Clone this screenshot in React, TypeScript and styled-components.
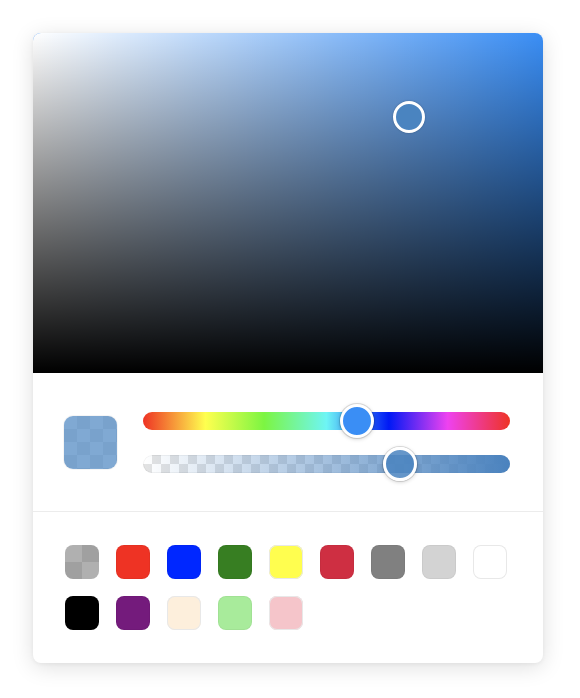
import React from "react";
import styled, { createGlobalStyle } from "styled-components";

const Global = createGlobalStyle`
  html, body { margin: 0; padding: 0; background: #ffffff; }
  body { font-family: "Liberation Sans", Arial, sans-serif; }
`;

const Page = styled.div`
  padding: 33px 37px 36px 33px;
`;

const Card = styled.div`
  width: 510px;
  background: #ffffff;
  border-radius: 8px;
  overflow: hidden;
  box-shadow: 0 4px 22px rgba(0, 0, 0, 0.13), 0 1px 4px rgba(0, 0, 0, 0.05);
`;

const Saturation = styled.div<{ $hue: string }>`
  position: relative;
  height: 340px;
  background: ${(p) => p.$hue};
`;

const WhiteLayer = styled.div`
  position: absolute;
  inset: 0;
  background: linear-gradient(to right, #ffffff, rgba(255, 255, 255, 0));
`;

const BlackLayer = styled.div`
  position: absolute;
  inset: 0;
  background: linear-gradient(to top, #000000, rgba(0, 0, 0, 0));
`;

const SatPointer = styled.div<{ $color: string }>`
  position: absolute;
  width: 26px;
  height: 26px;
  border-radius: 50%;
  border: 3px solid #ffffff;
  background: ${(p) => p.$color};
  transform: translate(-50%, -50%);
  box-shadow: 0 0 2px rgba(0, 0, 0, 0.25);
`;

const Controls = styled.div`
  display: flex;
  align-items: center;
  gap: 26px;
  padding: 39px 33px 38px 31px;
  border-bottom: 1px solid #ececec;
`;

const checker = (size: number, a: string, b: string) => `
  background-color: ${a};
  background-image:
    linear-gradient(45deg, ${b} 25%, transparent 25%, transparent 75%, ${b} 75%),
    linear-gradient(45deg, ${b} 25%, transparent 25%, transparent 75%, ${b} 75%);
  background-size: ${size * 2}px ${size * 2}px;
  background-position: 0 0, ${size}px ${size}px;
`;

const Preview = styled.div`
  position: relative;
  width: 53px;
  height: 53px;
  border-radius: 9px;
  overflow: hidden;
  flex: none;
  ${checker(13, "#ffffff", "#e6e6e6")}
  box-shadow: 0 0 0 1px rgba(0, 0, 0, 0.04);
`;

const Fill = styled.div<{ $color: string }>`
  position: absolute;
  inset: 0;
  background: ${(p) => p.$color};
`;

const Sliders = styled.div`
  flex: 1;
  display: flex;
  flex-direction: column;
  gap: 25px;
`;

const Track = styled.div`
  position: relative;
  height: 18px;
  border-radius: 9px;
`;

const HueTrack = styled(Track)`
  background: linear-gradient(
    to right,
    #ee3324 0%,
    #ffff4f 17%,
    #7cf542 33%,
    #6ef5f5 50%,
    #0019f5 67%,
    #ee42f0 83%,
    #ee3324 100%
  );
`;

const AlphaTrack = styled(Track)`
  overflow: visible;
`;

const AlphaBg = styled.div`
  position: absolute;
  inset: 0;
  border-radius: 9px;
  ${checker(9, "#ffffff", "#e3e3e3")}
  box-shadow: inset 0 0 0 1px rgba(0, 0, 0, 0.05);
`;

const AlphaGrad = styled.div<{ $color: string }>`
  position: absolute;
  inset: 0;
  border-radius: 9px;
  background: linear-gradient(to right, rgba(74, 130, 190, 0), ${(p) => p.$color});
`;

const Thumb = styled.div<{ $color: string }>`
  position: absolute;
  top: 50%;
  width: 28px;
  height: 28px;
  border-radius: 50%;
  border: 3px solid #ffffff;
  background: ${(p) => p.$color};
  transform: translate(-50%, -50%);
  box-shadow: 0 0 0 1px rgba(0, 0, 0, 0.12), 0 1px 4px rgba(0, 0, 0, 0.2);
`;

const Swatches = styled.div`
  display: grid;
  grid-template-columns: repeat(9, 34px);
  gap: 17px;
  padding: 33px 32px 33px 32px;
`;

const Swatch = styled.div<{ $color: string; $bordered?: boolean }>`
  width: 34px;
  height: 34px;
  border-radius: 8px;
  background: ${(p) => p.$color};
  box-shadow: ${(p) =>
    p.$bordered ? "inset 0 0 0 1px #e8e8e8" : "inset 0 0 0 1px rgba(0,0,0,0.04)"};
`;

const TransparentSwatch = styled.div`
  width: 34px;
  height: 34px;
  border-radius: 8px;
  ${checker(17, "#b0b0b0", "#a0a0a0")}
`;

const swatches: { c: string; b?: boolean }[] = [
  { c: "transparent" },
  { c: "#ee3324" },
  { c: "#0027ff" },
  { c: "#377e22" },
  { c: "#fffe4f", b: true },
  { c: "#ce2f42" },
  { c: "#808080" },
  { c: "#d3d3d3" },
  { c: "#ffffff", b: true },
  { c: "#000000" },
  { c: "#741b7c" },
  { c: "#fdefdc", b: true },
  { c: "#a8eb9b" },
  { c: "#f5c5ca", b: true },
];

export default function App() {
  const current = "#4a84c0";
  return (
    <>
      <Global />
      <Page>
        <Card>
          <Saturation $hue="#3a8ef5">
            <WhiteLayer />
            <BlackLayer />
            <SatPointer $color={current} style={{ left: "73.7%", top: "24.7%" }} />
          </Saturation>
          <Controls>
            <Preview>
              <Fill $color="rgba(74, 132, 192, 0.7)" />
            </Preview>
            <Sliders>
              <HueTrack>
                <Thumb $color="#3a8ef5" style={{ left: "58.3%" }} />
              </HueTrack>
              <AlphaTrack>
                <AlphaBg />
                <AlphaGrad $color="rgba(74, 130, 190, 1)" />
                <Thumb $color="rgba(74, 132, 192, 0.85)" style={{ left: "70%" }} />
              </AlphaTrack>
            </Sliders>
          </Controls>
          <Swatches>
            {swatches.map((s, i) =>
              s.c === "transparent" ? (
                <TransparentSwatch key={i} />
              ) : (
                <Swatch key={i} $color={s.c} $bordered={s.b} />
              )
            )}
          </Swatches>
        </Card>
      </Page>
    </>
  );
}
